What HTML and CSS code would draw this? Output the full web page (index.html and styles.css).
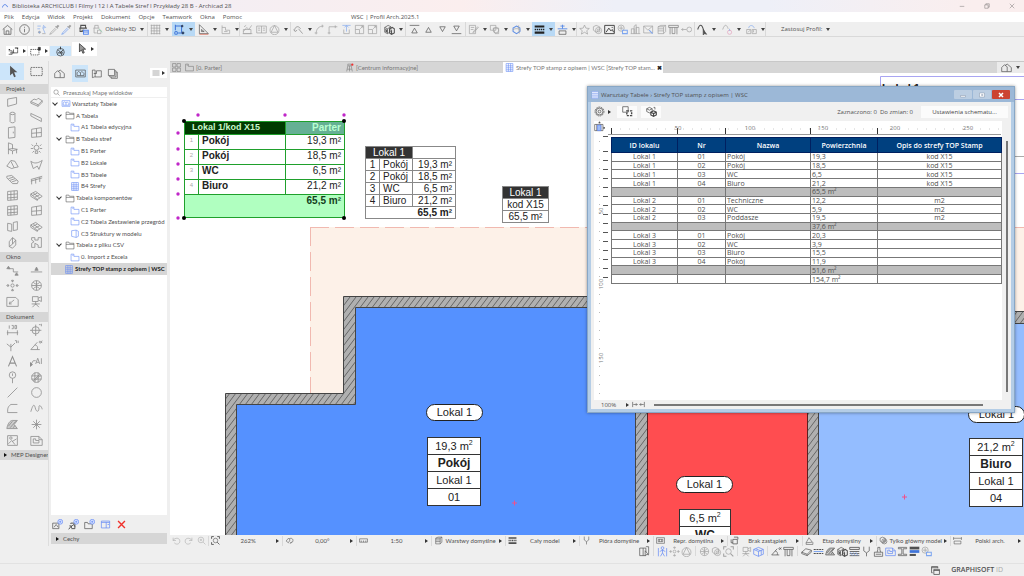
FILE: index.html
```
<!DOCTYPE html>
<html lang="pl">
<head>
    <meta charset="UTF-8">
    <title>Archicad 28</title>
    <link rel="stylesheet" href="styles.css">
</head>
<body>

    <!-- icon sprite -->
    <svg class="sprite">
        <symbol id="logo" viewBox="0 0 16 16"><path d="M1 12C3 3 11 1 15 11" stroke="#4a7be8" stroke-width="2.4"/></symbol>
        <symbol id="home" viewBox="0 0 16 16"><path d="M1 8L8 2l7 6M3 7v8h10V7M6 15v-5h4v5"/></symbol>
        <symbol id="info" viewBox="0 0 16 16"><circle cx="8" cy="8" r="7"/><path d="M8 7v5M8 4v1.500"/></symbol>
        <symbol id="pick" viewBox="0 0 16 16"><path d="M2 3h5M2 7h4M11 2l3 3-4 1zM10 6l3 7" stroke="#85abee"/><circle cx="5" cy="12" r="1.500" fill="#85abee"/><path d="M9 14h5"/></symbol>
        <symbol id="dropper" viewBox="0 0 16 16"><path d="M9 3l4 4M10 5L3 12l-2 3 3-1 7-7"/><path d="M11 5l3-3" stroke-width="3"/></symbol>
        <symbol id="syringe" viewBox="0 0 16 16"><path d="M9 3l4 4"/><path d="M10 5l-7 7-2 3 3-1 7-7" stroke="#6d9bf0"/><path d="M11 5l3-3" stroke-width="3"/></symbol>
        <symbol id="shelf" viewBox="0 0 16 16"><path d="M2 6h11M4 6V2h7v4M3 6v5h4M5 9h4" stroke-width="1.500"/><path d="M8 9h7v6H8zM8 11.500h7" stroke="#5c8cf0" stroke-width="1.500"/></symbol>
        <symbol id="shelf2" viewBox="0 0 16 16"><path d="M2 6h9M4 6V2h5v4M3 6v7h4M8 9h5v5H8z"/><path d="M10 7l5 5" stroke="#8fcfae"/></symbol>
        <symbol id="grid" viewBox="0 0 16 16"><path d="M1 2h14M1 6h14M1 10h14M1 14h14M2 1v14M6 1v14M10 1v14M14 1v14"/></symbol>
        <symbol id="snap" viewBox="0 0 16 16"><path d="M2 1v8M2 3h9v9M6 13h6" stroke="#3f74d8" stroke-width="1.500"/><circle cx="3" cy="13" r="2" stroke="#3f74d8" stroke-width="1.500"/><circle cx="13" cy="13" r="1.500" fill="#2456b8"/><circle cx="12" cy="3" r="1.200" fill="#2456b8"/></symbol>
        <symbol id="ruler" viewBox="0 0 16 16"><path d="M2 1v13h13z"/><path d="M5 8v3h4z"/><path d="M2 15h13" stroke="#e06a55"/></symbol>
        <symbol id="guide" viewBox="0 0 16 16"><path d="M3 2v12h11V9H8V5H3M6 11h5"/></symbol>
        <symbol id="hill" viewBox="0 0 16 16"><path d="M1 14h14M2 11l5-6 3 3 4-6M3 4l3-2M2 8h11v6H2z"/></symbol>
        <symbol id="panel" viewBox="0 0 16 16"><path d="M1 3h14v10H1zM8 3v10M3 6h3M3 9h3M10 6h3M10 9h3"/></symbol>
        <symbol id="tri" viewBox="0 0 16 16"><circle cx="8" cy="9" r="6.500"/><path d="M8 2l5 10H3z"/></symbol>
        <symbol id="hook" viewBox="0 0 16 16"><path d="M2 10C3 3 8 2 11 7M1 8l2 3 3-2M8 7l6 7" stroke-width="1.400"/></symbol>
        <symbol id="arc" viewBox="0 0 16 16"><path d="M3 15C3 7 7 3 14 3M1 13h4M12 1v4"/></symbol>
        <symbol id="corner" viewBox="0 0 16 16"><path d="M3 15V4h12M1 13h4M12 2v4"/></symbol>
        <symbol id="lift" viewBox="0 0 16 16"><path d="M2 2h12M8 3v8M5 5l3-3 3 3" stroke="#85abee"/><path d="M4 8v6h8V8"/></symbol>
        <symbol id="resize" viewBox="0 0 16 16"><path d="M2 2h12v12H2zM2 8h6v6M9 7l4-4M10 3h3v3"/></symbol>
        <symbol id="cube" viewBox="0 0 16 16"><path d="M1 5l7-3 7 3v7l-7 3-7-3zM1 5l7 3 7-3M8 8v7M4 4l7 3M12 6v7"/></symbol>
        <symbol id="cubes" viewBox="0 0 16 16"><path d="M1 5l5-3 4 2v7l-5 3-4-2zM1 5l4 2 5-3M5 7v7"/><path d="M8 7l4-2 3 2v6l-4 2-3-2zM11 9v6M2 8l3 2M2 10l3 2" stroke-width="1.500"/></symbol>
        <symbol id="top" viewBox="0 0 16 16"><path d="M1 2h14M8 6l4 7H4z"/></symbol>
        <symbol id="up" viewBox="0 0 16 16"><path d="M8 5l4 7H4z"/></symbol>
        <symbol id="down" viewBox="0 0 16 16"><path d="M8 11L4 4h8z"/></symbol>
        <symbol id="bottom" viewBox="0 0 16 16"><path d="M1 14h14M8 10L4 3h8z"/></symbol>
        <symbol id="note" viewBox="0 0 16 16"><path d="M2 2h9v12H2zM4 5h5M4 8h4M7 12l7-8 1 1-7 8z"/></symbol>
        <symbol id="shapes" viewBox="0 0 16 16"><path d="M2 2h8v7H2zM6 6h8v8H9z"/><circle cx="10" cy="9" r="4"/></symbol>
        <symbol id="orbit" viewBox="0 0 16 16"><path d="M8 3l5 3v5l-5 3-5-3V6z" stroke="#5f8fe6" stroke-width="1.500"/><path d="M2 9c2-3 10-3 12 0M11 2l1 12"/></symbol>
        <symbol id="layers" viewBox="0 0 16 16"><path d="M1 3.500h14M1 12.500h14" stroke-width="3"/><path d="M1 8h14" stroke-width="2.500" stroke-dasharray="2 1"/></symbol>
        <symbol id="plane" viewBox="0 0 16 16"><path d="M1 7h14M8 1v6M5 3h6" stroke="#5f8fe6" stroke-width="1.400"/><path d="M3 10h10v5H3z"/></symbol>
        <symbol id="star" viewBox="0 0 16 16"><path d="M8 1.500l2 4.500 5 .5-3.700 3.200 1.200 5L8 12l-4.500 2.700 1.200-5L1 6.500 6 6z"/></symbol>
        <symbol id="hex" viewBox="0 0 16 16"><path d="M6 2l5 2v5l-5 3-4-3V4z"/><circle cx="9.500" cy="9.500" r="4.500"/><circle cx="9.500" cy="9.500" r="2"/></symbol>
        <symbol id="image" viewBox="0 0 16 16"><path d="M1 2h14v12H1zM3 12l4-6 3 4 2-2 2 4" stroke-width="1.400"/><path d="M11 5h2"/></symbol>
        <symbol id="cloud" viewBox="0 0 16 16"><circle cx="6" cy="6" r="4.500"/><path d="M3 6h6M6 3v6"/><path d="M8 9h7v5H8z" stroke="#7ea6f0" stroke-width="1.500"/></symbol>
        <symbol id="bldg" viewBox="0 0 16 16"><path d="M2 14V7h4v7M6 14V3l3-2v13M9 14V5h4v9M1 14h14"/></symbol>
        <symbol id="mail" viewBox="0 0 16 16"><path d="M1 3h13v10H1zM1 3l6 6 7-6"/><path d="M9 9l5 5" stroke="#7ea6f0" stroke-width="1.500"/></symbol>
        <symbol id="stack" viewBox="0 0 16 16"><path d="M3 4l4-2h7l-3 2zM3 4v10h8V4M14 2v9l-3 3M3 7h8M3 10h8"/></symbol>
        <symbol id="frame" viewBox="0 0 16 16"><path d="M1 2h14v3H1zM3 5v10M13 5v10M6 5v9h4V5"/></symbol>
        <symbol id="link" viewBox="0 0 16 16"><circle cx="12" cy="8" r="3.500"/><path d="M8 8H1M3 6L1 8l2 2"/></symbol>
        <symbol id="polyarrow" viewBox="0 0 16 16"><path d="M1 8C4-1 7 1 9 7l2 6" stroke-width="1.500"/><path d="M9 8v8l2-2 3 1z" fill="currentColor"/></symbol>
        <symbol id="polypin" viewBox="0 0 16 16"><path d="M1 8C4-1 7 1 9 7"/><circle cx="11" cy="12" r="3" stroke="#e3a2bd"/><path d="M11 7v3" stroke="#85abee"/></symbol>
        <symbol id="lock" viewBox="0 0 16 16"><path d="M1 8h6v6H1zM9 8h6v6H9zM3 12l3-3M11 12V9"/><path d="M4 6c0-5 7-5 8 0" stroke="#85abee"/></symbol>
        <symbol id="arrow" viewBox="0 0 16 16"><path d="M5 1v12l3-3 2 5 2-1-2-5h4z" fill="currentColor" stroke="none"/></symbol>
        <symbol id="cursor" viewBox="0 0 16 16"><path d="M5 1v12l3-3 2 5 2-1-2-5h4z" fill="#999" stroke="#222"/></symbol>
        <symbol id="marquee" viewBox="0 0 16 16"><path d="M1 3h14v10H1z" stroke-dasharray="2 1"/></symbol>
        <symbol id="marqueedot" viewBox="0 0 16 16"><path d="M1 5h12v8H1z" stroke-dasharray="2 1"/><path d="M12 2h3v4h-3z" fill="currentColor"/></symbol>
        <symbol id="spin" viewBox="0 0 16 16"><circle cx="8" cy="9" r="5.500"/><path d="M8 9l4-3M8 1v4M5 6l3 3 2 4M4 10h8" stroke-width="1.300"/></symbol>
        <symbol id="walls" viewBox="0 0 16 16"><path d="M1 7h5v5H1M3 10h6M8 5v5h6V6" /><path d="M1 5h2M10 3h4v2" stroke-width="1.500"/></symbol>
        <symbol id="wall" viewBox="0 0 16 16"><path d="M2 5l11-2v8L2 14z"/></symbol>
        <symbol id="slab" viewBox="0 0 16 16"><path d="M1 9l6-5 8 2-6 6zM1 9v2l8 3v-2M9 14l6-5V6"/></symbol>
        <symbol id="slabtop" viewBox="0 0 16 16"><path d="M1 8l4-3 3 1 2-2 5 3-5 5zM1 8v2l9 4v-2M10 14l5-5V7"/></symbol>
        <symbol id="column" viewBox="0 0 16 16"><ellipse cx="8" cy="3" rx="3" ry="1.500"/><path d="M5 3v10c0 2 6 2 6 0V3"/></symbol>
        <symbol id="beam" viewBox="0 0 16 16"><path d="M1 3l13 6v4L1 6z"/></symbol>
        <symbol id="door" viewBox="0 0 16 16"><path d="M3 2l8-1v13l-8 1zM9 7v2"/></symbol>
        <symbol id="window" viewBox="0 0 16 16"><path d="M2 4l12-2v11L2 14zM8 3v10.500M2 9l12-1"/></symbol>
        <symbol id="chair" viewBox="0 0 16 16"><path d="M3 1v14M3 1l5 2v6M3 9l5 2 6-2-6-1M8 11v4M13 9v5M3 9l5-1"/></symbol>
        <symbol id="lamp" viewBox="0 0 16 16"><circle cx="8" cy="7" r="3"/><path d="M6.500 11h3v3h-3zM8 1v2M2 3l2 2M14 3l-2 2M1 8h3M12 8h3M3 13l2-2M13 13l-2-2"/></symbol>
        <symbol id="roof" viewBox="0 0 16 16"><path d="M1 10l5-7 5 1 4 7-5 1-4-8M1 10l6 3 3-1"/></symbol>
        <symbol id="shell" viewBox="0 0 16 16"><path d="M1 4c4 3 8 3 14-1l-4 11-2-4-5 3z"/></symbol>
        <symbol id="stair" viewBox="0 0 16 16"><path d="M1 4l6-1 8 7-1 3H8L1 6zM3 7l6-2M5 9l6-2M7 11l6-2"/></symbol>
        <symbol id="rail" viewBox="0 0 16 16"><path d="M1 8l14-4M1 10l14-4M2 8v6M7 7v6M12 5v6"/></symbol>
        <symbol id="cwall" viewBox="0 0 16 16"><path d="M2 3l12-1v11L2 14zM6 3v11M10 2v11M2 7l12-1M2 11l12-1"/></symbol>
        <symbol id="mesh" viewBox="0 0 16 16"><path d="M1 6l6-3 8 6-6 4zM4 5l8 6M3 8l6-3M6 10l6-3M1 6v3l8 5v-2"/></symbol>
        <symbol id="zone" viewBox="0 0 16 16"><path d="M2 4l5 1v9l-5-1zM9 3l5-1v10l-5 1z"/></symbol>
        <symbol id="morph" viewBox="0 0 16 16"><path d="M4 7l4-5 4 3v6l-4 4-4-2zM8 2v8l-4 3M8 10l4-5"/></symbol>
        <symbol id="puzzle" viewBox="0 0 16 16"><path d="M2 2h4v3h4V2h4v12h-4v-3L6 9v5H2V9l3-2-3-2z"/></symbol>
        <symbol id="section" viewBox="0 0 16 16"><path d="M3 7h6v4h6"/><path d="M1 7l2-3 2 3zM11 15l2-3 2 3z" fill="currentColor"/></symbol>
        <symbol id="elev" viewBox="0 0 16 16"><path d="M1 11h14"/><path d="M6 9l2-4 2 4z" fill="currentColor"/></symbol>
        <symbol id="interior" viewBox="0 0 16 16"><circle cx="8" cy="8" r="2"/><path d="M8 2v2M8 12v2M2 8h2M12 8h2M6.500 2.500h3L8 1zM6.500 13.500h3L8 15zM2.500 6.500v3L1 8zM13.500 6.500v3L15 8z"/></symbol>
        <symbol id="globe" viewBox="0 0 16 16"><circle cx="8" cy="8" r="6"/><path d="M8 2v12M2 8h12M4 4c3 3 5 3 8 0M4 12c3-3 5-3 8 0"/></symbol>
        <symbol id="detail" viewBox="0 0 16 16"><path d="M1 3h11l3 3v8H1zM4 11l6-5M4 11l1-3M4 11h3"/></symbol>
        <symbol id="camera" viewBox="0 0 16 16"><path d="M3 2h7v6H3zM10 4l4-2v6l-4-2M7 8v4M3 15l4-4 4 4M2 11h10"/></symbol>
        <symbol id="dim" viewBox="0 0 16 16"><path d="M1 12h14M2 9v6M14 9v6M4 3v4M7 3h2v4H7M11 3h2v4h-2z"/></symbol>
        <symbol id="level" viewBox="0 0 16 16"><circle cx="7" cy="9" r="4.500"/><path d="M7 2v14M0 9h14M11 2h2M14 1v3"/></symbol>
        <symbol id="slope" viewBox="0 0 16 16"><path d="M1 6l5 4V6M6 10v5M6 10l5-5M11 2h2v3M15 2v3"/></symbol>
        <symbol id="angle" viewBox="0 0 16 16"><path d="M9 4L1 13h11M6 7c3 1 4 3 3 6M13 3c-2-2-2 3 0 2l2-3M13 3l2 2"/></symbol>
        <symbol id="text" viewBox="0 0 16 16"><path d="M3 14L8 2l5 12M5 10h6" stroke-width="1.300"/></symbol>
        <symbol id="label" viewBox="0 0 16 16"><path d="M1 12l3-5h3M7 11l2.500-7L12 11M8 9h3M14 4v7"/><path d="M0 14V9l3 3z" fill="currentColor"/></symbol>
        <symbol id="pin" viewBox="0 0 16 16"><circle cx="8" cy="5" r="4"/><path d="M8 9v6M8 3v3"/></symbol>
        <symbol id="zonex" viewBox="0 0 16 16"><circle cx="8" cy="8" r="6"/><path d="M2 6h12M2 10h12M6 2v12M10 2v12M4 12l8-8M6 12l6-6"/></symbol>
        <symbol id="line" viewBox="0 0 16 16"><path d="M2 14L14 2"/></symbol>
        <symbol id="circle" viewBox="0 0 16 16"><circle cx="8" cy="8" r="6"/></symbol>
        <symbol id="poly" viewBox="0 0 16 16"><path d="M14 3H6C2 6 2 8 2 13h12"/></symbol>
        <symbol id="spline" viewBox="0 0 16 16"><path d="M1 12C5-2 6 6 7 9s4 4 4-2 4 0 4 2"/></symbol>
        <symbol id="fill" viewBox="0 0 16 16"><path d="M1 13C2 7 5 3 8 3h6l-4 5 4 5z" fill="#ccc"/><path d="M3 10l5-6M5 12l7-8M9 12l2-3"/></symbol>
        <symbol id="spark" viewBox="0 0 16 16"><path d="M8 2v12M2 8h12M4 4l8 8M12 4l-8 8"/></symbol>
        <symbol id="figure" viewBox="0 0 16 16"><path d="M2 2h12v12H2zM3 12l4-4 4 5M8 9l5-3"/><circle cx="6" cy="5" r="1.500"/></symbol>
        <symbol id="drawing" viewBox="0 0 16 16"><path d="M1 3h10l4 4v7H1zM4 11V6h3v2h4v3zM11 3v4h4"/></symbol>
        <symbol id="map" viewBox="0 0 16 16"><path d="M1 14V8l4-4 4 3v7zM6 5l3-2 6 5v6H9"/></symbol>
        <symbol id="views" viewBox="0 0 16 16"><path d="M1 3h14v10H1z"/><path d="M3 11V7l2-2 3 2v4zM8 7l2-2 3 3v3H8"/></symbol>
        <symbol id="layout" viewBox="0 0 16 16"><path d="M2 3v11l3-1h10V4H8v4H4M2 3h4v10"/></symbol>
        <symbol id="pubset" viewBox="0 0 16 16"><path d="M2 2h9v9H2zM11 4h2v9H4v-2M13 6h2v9H6v-2"/></symbol>
        <symbol id="menu" viewBox="0 0 16 16"><path d="M1 4h14M1 8h14M1 12h14"/></symbol>
        <symbol id="search" viewBox="0 0 16 16"><circle cx="7" cy="7" r="5"/><path d="M11 11l4 4"/></symbol>
        <symbol id="folder" viewBox="0 0 16 16"><path d="M1 14V2h5l1 2h8v10zM1 6h14"/></symbol>
        <symbol id="view" viewBox="0 0 16 16"><path d="M1 14V2h5v4h9v8zM3 4h2"/></symbol>
        <symbol id="sheet" viewBox="0 0 16 16"><path d="M2 1h12v14H2zM2 5h12M2 8.500h12M2 12h12M6 1v14M10 1v14"/></symbol>
        <symbol id="box3d" viewBox="0 0 16 16"><path d="M2 3l8-1 4 2v9l-4 2-8-2zM10 2v13"/></symbol>
        <symbol id="addview" viewBox="0 0 16 16"><path d="M1 14V6h9v8zM3 12l3-4 3 4"/><circle cx="12" cy="4" r="3.500" stroke="#5f86f5" fill="#dde6ff"/><path d="M12 2.500v3M10.500 4h3" stroke="#5f86f5"/></symbol>
        <symbol id="saveview" viewBox="0 0 16 16"><path d="M4 7V6h6v8H5M6 10l2-2 2 3M1 15l4-5M5 13v-3H2" stroke-width="1.400"/><circle cx="12" cy="4" r="3.500" stroke="#5f86f5" fill="#dde6ff"/><path d="M12 2.500v3M10.500 4h3" stroke="#5f86f5"/></symbol>
        <symbol id="addfolder" viewBox="0 0 16 16"><path d="M1 14V5h4l1 2h6v7z"/><circle cx="12" cy="4" r="3.500" stroke="#5f86f5" fill="#dde6ff"/><path d="M12 2.500v3M10.500 4h3" stroke="#5f86f5"/></symbol>
        <symbol id="winset" viewBox="0 0 16 16"><path d="M2 3h12v10H2zM2 5h12M9 5v8M11 8h2" stroke="#5f86f5"/></symbol>
        <symbol id="del" viewBox="0 0 16 16"><path d="M3 3l10 10M13 3L3 13" stroke="#f0302a" stroke-width="2"/></symbol>
        <symbol id="tiles" viewBox="0 0 16 16"><path d="M1 1h6v6H1zM9 1h6v6H9zM1 9h6v6H1zM9 9h6v6H9z"/></symbol>
        <symbol id="tower" viewBox="0 0 16 16"><path d="M3 15l2-10h6l2 10M5 5V2h6v3M4 11h8M8 5v10"/><circle cx="13" cy="3" r="2" fill="#f03030" stroke="none"/></symbol>
        <symbol id="undo" viewBox="0 0 16 16"><path d="M2 3v5h5M2 8c3-6 12-5 12 1s-7 7-10 3"/></symbol>
        <symbol id="redo" viewBox="0 0 16 16"><path d="M14 3v5H9M14 8C11 2 2 3 2 9s7 7 10 3"/></symbol>
        <symbol id="zoomin" viewBox="0 0 16 16"><circle cx="7" cy="7" r="5"/><path d="M11 11l4 4M5 7h4M7 5v4"/></symbol>
        <symbol id="zoomfit" viewBox="0 0 16 16"><circle cx="8" cy="8" r="4"/><path d="M11 11l4 4M1 5V1h4M11 1h4v4M5 15H1v-4" stroke-width="1.500"/></symbol>
        <symbol id="rotate" viewBox="0 0 16 16"><path d="M2 9l4-5 3 3-3 5zM7 5c6-3 9 2 6 6l-4 2M9 13l3-3"/></symbol>
        <symbol id="scale" viewBox="0 0 16 16"><path d="M1 5h14v6H1zM4 8v3M8 8v3M12 8v3"/></symbol>
        <symbol id="pens" viewBox="0 0 16 16"><path d="M4 1v6l4 3 4-3V1M8 10v5"/></symbol>
        <symbol id="tag" viewBox="0 0 16 16"><path d="M1 3h14v10H1zM4 6h8v4H4zM6 6v4M10 6v4"/></symbol>
        <symbol id="override" viewBox="0 0 16 16"><path d="M5 6h8v8H5zM7 2h7v4M2 6v6h3" stroke-width="1.300"/></symbol>
        <symbol id="pagepick" viewBox="0 0 16 16"><path d="M1 3h9v11H1zM6 3v11M10 1h4v11"/><path d="M9 7v7l2-2 3 1z" fill="#fff"/></symbol>
        <symbol id="reno" viewBox="0 0 16 16"><path d="M2 12l5-9 6 8zM2 12v3h12v-4"/></symbol>
        <symbol id="stampi" viewBox="0 0 16 16"><path d="M2 9h12v6H2zM6 9l1-4V2h3v3l1 4M4 12h8"/></symbol>
        <symbol id="std" viewBox="0 0 16 16"><path d="M1 2v5M15 2v5M1 4h14M2 9h12v5H2z"/></symbol>
        <symbol id="person" viewBox="0 0 16 16"><circle cx="8" cy="3" r="2"/><path d="M8 5v5M4 8l4-2 4 2M5 15l3-5 3 5M2 3v12M14 3v12"/></symbol>
        <symbol id="hline" viewBox="0 0 16 16"><path d="M1 5h14M1 11h14" stroke-width="1.500" stroke-dasharray="3 1"/><path d="M1 8h14" stroke="#7ea6f0" stroke-width="1.500"/></symbol>
        <symbol id="hatch" viewBox="0 0 16 16"><path d="M1 2h14v3H1zM1 8h14M1 11h14M1 14h14" stroke-width="1.200"/><path d="M2 9l3 5M6 9l3 5M10 9l3 5" stroke="#7ea6f0"/></symbol>
        <symbol id="ibeam" viewBox="0 0 16 16"><path d="M2 2h12v2H9v8h5v2H2v-2h5V4H2z"/></symbol>
        <symbol id="bars" viewBox="0 0 16 16"><path d="M1 3h14" stroke-width="4"/><path d="M1 8h14" stroke="#3f74d8" stroke-width="4"/><path d="M1 13h9" stroke-width="3"/></symbol>
        <symbol id="windows" viewBox="0 0 16 16"><path d="M5 6h10v9H5zM5 8h10M3 12H1V1h11v3M1 3h11" stroke-width="1.400"/></symbol>
        <symbol id="gear" viewBox="0 0 16 16"><circle cx="8" cy="8" r="6.500" stroke-dasharray="2.500 1"/><circle cx="8" cy="8" r="5"/><circle cx="8" cy="8" r="2"/></symbol>
        <symbol id="select2d" viewBox="0 0 16 16"><path d="M1 1h8v8H1z"/><path d="M7 7h7v7H7z" stroke-dasharray="3 1.500" stroke-width="2"/></symbol>
        <symbol id="select3d" viewBox="0 0 16 16"><path d="M1 4l4-2 4 2v4L5 10 1 8zM1 4l4 2 4-2"/><path d="M7 9l4-2 4 2v4l-4 2-4-2zM7 9l4 2 4-2M11 11v4" stroke-width="1.600"/><path d="M11 2h2v3"/></symbol>
        <symbol id="fit" viewBox="0 0 20 10"><path d="M1 1v8M19 1v8M2 5h6M12 5h6M6 3l2 2-2 2M14 3l-2 2 2 2"/></symbol>
        <symbol id="origin" viewBox="0 0 16 16"><path d="M1 5h12v9H1zM4 5v9M10 5v9"/><path d="M5 6h5v8H5z" fill="#9cbcf8" stroke="#5f86f5"/><path d="M7 3l1-2 1 2zM14 9l2 1-2 1z" fill="currentColor"/></symbol>
    </svg>

    <header class="titlebar">
        <svg class="icon"><use href="#logo"/></svg>
        <span class="app-title">Biblioteka ARCHICLUB I Filmy I 12 I A Tabele Stref I Przykłady 28 B - Archicad 28</span>
        <div class="win-buttons">
            <button aria-label="Minimalizuj"><svg class="icon" viewBox="0 0 16 16"><path d="M2 9h12"/></svg></button>
            <button aria-label="Przywróć"><svg class="icon" viewBox="0 0 16 16"><path d="M2 5h9v9H2zM5 5V2h9v9h-3"/></svg></button>
            <button aria-label="Zamknij"><svg class="icon" viewBox="0 0 16 16"><path d="M2 2l12 12M14 2L2 14"/></svg></button>
        </div>
    </header>

    <nav class="menubar">
        <button>Plik</button><button>Edycja</button><button>Widok</button><button>Projekt</button><button>Dokument</button><button>Opcje</button><button>Teamwork</button><button>Okna</button><button>Pomoc</button>
        <span class="profile">WSC | Profil Arch.2025.1</span>
    </nav>

    <div class="toolbar">
        <div class="group"><button aria-label="Start"><svg class="icon"><use href="#home"/></svg></button></div>
        <div class="group"><button aria-label="Info"><svg class="icon"><use href="#info"/></svg></button></div>
        <div class="group faint">
            <button><svg class="icon"><use href="#pick"/></svg></button>
            <button><svg class="icon"><use href="#dropper"/></svg></button>
            <button><svg class="icon"><use href="#syringe"/></svg></button>
        </div>
        <div class="group">
            <button><svg class="icon"><use href="#shelf"/></svg></button>
            <button class="faint"><svg class="icon"><use href="#shelf2"/></svg></button>
            <button class="drop">Obiekty 3D</button>
        </div>
        <div class="group tight">
            <button class="drop faint"><svg class="icon"><use href="#grid"/></svg></button>
            <button class="drop on"><svg class="icon"><use href="#snap"/></svg></button>
            <button class="drop"><svg class="icon"><use href="#ruler"/></svg></button>
            <button class="drop faint"><svg class="icon"><use href="#guide"/></svg></button>
        </div>
        <div class="group faint">
            <button><svg class="icon"><use href="#hill"/></svg></button>
            <button><svg class="icon"><use href="#panel"/></svg></button>
            <button class="drop"><svg class="icon"><use href="#tri"/></svg></button>
        </div>
        <div class="group faint">
            <button class="drop"><svg class="icon"><use href="#hook"/></svg></button>
            <button><svg class="icon"><use href="#arc"/></svg></button>
            <button><svg class="icon"><use href="#corner"/></svg></button>
            <button><svg class="icon"><use href="#lift"/></svg></button>
            <button><svg class="icon"><use href="#resize"/></svg></button>
            <button><svg class="icon"><use href="#resize"/></svg></button>
        </div>
        <div class="group"><button class="drop"><svg class="icon"><use href="#cubes"/></svg></button></div>
        <div class="group">
            <button><svg class="icon"><use href="#top"/></svg></button>
            <button><svg class="icon"><use href="#up"/></svg></button>
            <button><svg class="icon"><use href="#down"/></svg></button>
            <button><svg class="icon"><use href="#bottom"/></svg></button>
        </div>
        <div class="group tight">
            <button class="drop faint"><svg class="icon"><use href="#note"/></svg></button>
            <button class="drop faint"><svg class="icon"><use href="#shapes"/></svg></button>
            <button class="drop faint"><svg class="icon"><use href="#orbit"/></svg></button>
            <button class="drop on"><svg class="icon"><use href="#layers"/></svg></button>
            <button class="drop"><svg class="icon"><use href="#plane"/></svg></button>
        </div>
        <div class="group faint">
            <button><svg class="icon"><use href="#star"/></svg></button>
            <button><svg class="icon"><use href="#hex"/></svg></button>
            <button class="dark"><svg class="icon"><use href="#image"/></svg></button>
            <button><svg class="icon"><use href="#cloud"/></svg></button>
            <button><svg class="icon"><use href="#bldg"/></svg></button>
            <button><svg class="icon"><use href="#mail"/></svg></button>
            <button><svg class="icon"><use href="#stack"/></svg></button>
            <button class="mid"><svg class="icon"><use href="#frame"/></svg></button>
            <button><svg class="icon"><use href="#link"/></svg></button>
        </div>
        <div class="group tight">
            <button class="drop"><svg class="icon"><use href="#polyarrow"/></svg></button>
            <button class="drop faint"><svg class="icon"><use href="#polypin"/></svg></button>
            <button class="drop faint"><svg class="icon"><use href="#lock"/></svg></button>
        </div>
        <button class="drop profile-btn">Zastosuj Profil:</button>
    </div>

    <div class="infobox">
        <button class="pop"><svg class="icon"><use href="#walls"/></svg></button>
        <button class="pop"><svg class="icon"><use href="#marqueedot"/></svg></button>
        <button class="pop active"><svg class="icon"><use href="#spin"/></svg></button>
        <button class="pop tall"><svg class="icon"><use href="#cursor"/></svg></button>
    </div>

    <main class="main">
        <aside class="toolbox">
            <div class="tools pick-tools">
                <button class="selected" aria-label="Wskaźnik"><svg class="icon"><use href="#arrow"/></svg></button>
                <button aria-label="Zaznaczenie"><svg class="icon"><use href="#marquee"/></svg></button>
            </div>
            <h3>Projekt</h3>
            <div class="tools project-tools">
                <button><svg class="icon"><use href="#wall"/></svg></button><button><svg class="icon"><use href="#slabtop"/></svg></button>
                <button><svg class="icon"><use href="#column"/></svg></button><button><svg class="icon"><use href="#beam"/></svg></button>
                <button><svg class="icon"><use href="#door"/></svg></button><button><svg class="icon"><use href="#window"/></svg></button>
                <button><svg class="icon"><use href="#chair"/></svg></button><button><svg class="icon"><use href="#lamp"/></svg></button>
                <button><svg class="icon"><use href="#roof"/></svg></button><button><svg class="icon"><use href="#shell"/></svg></button>
                <button><svg class="icon"><use href="#stair"/></svg></button><button><svg class="icon"><use href="#rail"/></svg></button>
                <button><svg class="icon"><use href="#cwall"/></svg></button><button><svg class="icon"><use href="#mesh"/></svg></button>
                <button><svg class="icon"><use href="#cwall"/></svg></button><button><svg class="icon"><use href="#window"/></svg></button>
                <button><svg class="icon"><use href="#zone"/></svg></button><button><svg class="icon"><use href="#mesh"/></svg></button>
                <button><svg class="icon"><use href="#morph"/></svg></button><button><svg class="icon"><use href="#puzzle"/></svg></button>
            </div>
            <h3>Okno</h3>
            <div class="tools window-tools">
                <button><svg class="icon"><use href="#section"/></svg></button><button><svg class="icon"><use href="#elev"/></svg></button>
                <button><svg class="icon"><use href="#interior"/></svg></button><button><svg class="icon"><use href="#globe"/></svg></button>
                <button><svg class="icon"><use href="#detail"/></svg></button><button><svg class="icon"><use href="#camera"/></svg></button>
            </div>
            <h3>Dokument</h3>
            <div class="tools doc-tools">
                <button><svg class="icon"><use href="#dim"/></svg></button><button><svg class="icon"><use href="#level"/></svg></button>
                <button><svg class="icon"><use href="#slope"/></svg></button><button><svg class="icon"><use href="#angle"/></svg></button>
                <button><svg class="icon"><use href="#text"/></svg></button><button><svg class="icon"><use href="#label"/></svg></button>
                <button><svg class="icon"><use href="#pin"/></svg></button><button><svg class="icon"><use href="#zonex"/></svg></button>
                <button><svg class="icon"><use href="#line"/></svg></button><button><svg class="icon"><use href="#circle"/></svg></button>
                <button><svg class="icon"><use href="#poly"/></svg></button><button><svg class="icon"><use href="#spline"/></svg></button>
                <button><svg class="icon"><use href="#fill"/></svg></button><button><svg class="icon"><use href="#spark"/></svg></button>
                <button><svg class="icon"><use href="#figure"/></svg></button><button><svg class="icon"><use href="#drawing"/></svg></button>
            </div>
            <h3 class="closed">MEP Designer</h3>
        </aside>

        <aside class="navigator">
            <div class="nav-tabs">
                <button aria-label="Mapa projektu"><svg class="icon"><use href="#map"/></svg></button>
                <button class="selected" aria-label="Mapa widoków"><svg class="icon"><use href="#views"/></svg></button>
                <button aria-label="Teczka arkuszy"><svg class="icon"><use href="#layout"/></svg></button>
                <button aria-label="Publikator"><svg class="icon"><use href="#pubset"/></svg></button>
                <button class="nav-menu" aria-label="Menu"><svg class="icon"><use href="#menu"/></svg></button>
            </div>
            <label class="search">
                <svg class="icon"><use href="#search"/></svg>
                <input type="text" placeholder="Przeszukaj Mapę widoków" aria-label="Przeszukaj Mapę widoków">
            </label>
            <div class="tree-box">
                <ul class="tree">
                    <li class="lvl0 open blue"><svg class="icon"><use href="#views"/></svg>Warsztaty Tabele</li>
                    <li class="lvl1 open"><svg class="icon"><use href="#folder"/></svg>A Tabela</li>
                    <li class="lvl2 blue"><svg class="icon"><use href="#view"/></svg>A1 Tabela edycyjna</li>
                    <li class="lvl1 open"><svg class="icon"><use href="#folder"/></svg>B Tabela stref</li>
                    <li class="lvl2 blue"><svg class="icon"><use href="#view"/></svg>B1 Parter</li>
                    <li class="lvl2 blue"><svg class="icon"><use href="#view"/></svg>B2 Lokale</li>
                    <li class="lvl2 blue"><svg class="icon"><use href="#view"/></svg>B3 Tabele</li>
                    <li class="lvl2 blue"><svg class="icon"><use href="#sheet"/></svg>B4 Strefy</li>
                    <li class="lvl1 open"><svg class="icon"><use href="#folder"/></svg>Tabela komponentów</li>
                    <li class="lvl2 blue"><svg class="icon"><use href="#view"/></svg>C1 Parter</li>
                    <li class="lvl2 blue"><svg class="icon"><use href="#view"/></svg>C2 Tabela Zestawienie przegród</li>
                    <li class="lvl2 blue"><svg class="icon"><use href="#box3d"/></svg>C3 Struktury w modelu</li>
                    <li class="lvl1 open"><svg class="icon"><use href="#folder"/></svg>Tabela z pliku CSV</li>
                    <li class="lvl2 blue"><svg class="icon"><use href="#view"/></svg>0. Import z Excela</li>
                    <li class="lvl1 blue current"><svg class="icon"><use href="#sheet"/></svg>Strefy TOP stamp z opisem | WSC</li>
                </ul>
            </div>
            <div class="nav-actions">
                <button><svg class="icon"><use href="#addview"/></svg></button>
                <button><svg class="icon"><use href="#saveview"/></svg></button>
                <button><svg class="icon"><use href="#addfolder"/></svg></button>
                <button><svg class="icon"><use href="#winset"/></svg></button>
                <button aria-label="Usuń"><svg class="icon"><use href="#del"/></svg></button>
            </div>
            <button class="props">Cechy</button>
        </aside>

        <section class="workspace">
            <div class="tabs">
                <button class="overview" aria-label="Przegląd kart"><svg class="icon"><use href="#tiles"/></svg></button>
                <div class="tab"><svg class="icon"><use href="#view"/></svg>[0. Parter]</div>
                <div class="tab"><svg class="icon"><use href="#tower"/></svg>[Centrum informacyjne]</div>
                <div class="tab active blue"><svg class="icon"><use href="#sheet"/></svg><span>Strefy TOP stamp z opisem | WSC [Strefy TOP stam...</span><b>✖</b></div>
                <button class="drop tab-nav"><svg class="icon"><use href="#map"/></svg></button>
            </div>

            <div class="canvas">
                <!-- floor plan: terrace, walls, rooms -->
                <svg class="plan">
                    <defs>
                        <pattern id="wallhatch" width="6" height="8" patternUnits="userSpaceOnUse">
                            <rect width="6" height="8" fill="#b0b0b0"/>
                            <path d="M-1 9.300L7-1.300M-1 1.300L1-1.300M5 9.300L7 6.700" stroke="#666" stroke-width="1"/>
                        </pattern>
                    </defs>
                    <rect x="140" y="154" width="100%" height="166" fill="#fdf1e8"/>
                    <path d="M140 154.500H3000" stroke="#f1b9b0" stroke-dasharray="19 6"/>
                    <path d="M140.500 154V320" stroke="#f1b9b0" stroke-dasharray="19 6"/>
                    <path d="M173.500 223.500H648V238.500H3000V480H55.500V320.500H173.500Z" fill="url(#wallhatch)" stroke="#444"/>
                    <path d="M185.500 234.500H465.500V480H66.500V331.500H185.500Z" fill="#5591ff" stroke="#444"/>
                    <rect x="477.500" y="234.500" width="160" height="250" fill="#ff4d50" stroke="#5a2020"/>
                    <rect x="648.500" y="250.500" width="100%" height="250" fill="#94bdff" stroke="#444"/>
                    <path d="M342 430h5M344.500 427.500v5M732 424h5M734.500 421.500v5" stroke="#f0508a"/>
                    <path d="M710.500 40V3.500H3000M710 26.500H3000M710 100.500H3000" stroke="#a9a5f2"/>
                    <path d="M710 83.500H3000" stroke="#aaa"/>
                </svg>
                <div class="clipped-label">Lokal 1</div>

                <table class="parter">
                    <colgroup><col class="c-no"><col><col class="c-m2"></colgroup>
                    <tr><th colspan="2">Lokal 1/kod X15</th><th>Parter</th></tr>
                    <tr><td>1</td><td>Pokój</td><td>19,3 m²</td></tr>
                    <tr><td>2</td><td>Pokój</td><td>18,5 m²</td></tr>
                    <tr><td>3</td><td>WC</td><td>6,5 m²</td></tr>
                    <tr><td>4</td><td>Biuro</td><td>21,2 m²</td></tr>
                    <tr class="sum"><td colspan="3">65,5 m²</td></tr>
                </table>
                <!-- selection handles -->
                <svg class="handles">
                    <g fill="#000"><circle cx="8" cy="8" r="2"/><circle cx="168" cy="8" r="2"/><circle cx="8" cy="105" r="2"/><circle cx="168" cy="105" r="2"/></g>
                    <g fill="#c026c8"><circle cx="22" cy="2" r="1.700"/><circle cx="109" cy="2" r="1.700"/><circle cx="168" cy="2" r="1.700"/><circle cx="2" cy="20" r="1.700"/><circle cx="2" cy="36" r="1.700"/><circle cx="2" cy="51" r="1.700"/><circle cx="2" cy="66" r="1.700"/><circle cx="2" cy="81" r="1.700"/><circle cx="2" cy="105" r="1.700"/></g>
                </svg>

                <table class="rooms">
                    <colgroup><col class="c-no"><col><col class="c-area"></colgroup>
                    <tr><th colspan="2">Lokal 1</th><td></td></tr>
                    <tr><td>1</td><td>Pokój</td><td>19,3 m²</td></tr>
                    <tr><td>2</td><td>Pokój</td><td>18,5 m²</td></tr>
                    <tr><td>3</td><td>WC</td><td>6,5 m²</td></tr>
                    <tr><td>4</td><td>Biuro</td><td>21,2 m²</td></tr>
                    <tr class="sum"><td colspan="3">65,5 m²</td></tr>
                </table>

                <table class="topstamp">
                    <tr><th>Lokal 1</th></tr>
                    <tr><td>kod X15</td></tr>
                    <tr><td>65,5 m²</td></tr>
                </table>

                <div class="pill pill-a">Lokal 1</div>
                <div class="stamp stamp-a"><span>19,3 m<sup>2</sup></span><b>Pokój</b><span>Lokal 1</span><span>01</span></div>
                <div class="pill pill-b">Lokal 1</div>
                <div class="stamp stamp-b"><span>6,5 m<sup>2</sup></span><b>WC</b></div>
                <div class="pill pill-c">Lokal 1</div>
                <div class="stamp stamp-c"><span>21,2 m<sup>2</sup></span><b>Biuro</b><span>Lokal 1</span><span>04</span></div>

                <div class="window">
                    <div class="window-title">
                        <svg class="icon"><use href="#sheet"/></svg>
                        <span>Warsztaty Tabele › Strefy TOP stamp z opisem | WSC</span>
                        <div class="window-buttons">
                            <button aria-label="Minimalizuj"><svg class="icon" viewBox="0 0 16 16"><path d="M3 9h10v3H3z" fill="#fff"/></svg></button>
                            <button aria-label="Maksymalizuj"><svg class="icon" viewBox="0 0 16 16"><path d="M3 4h10v8H3zM7 7h3v2H7z" fill="#fff"/></svg></button>
                            <button class="close" aria-label="Zamknij"><svg class="icon" viewBox="0 0 16 16"><path d="M4 4l8 8M12 4l-8 8"/></svg></button>
                        </div>
                    </div>
                    <div class="window-bar">
                        <button class="gear"><svg class="icon"><use href="#gear"/></svg></button>
                        <button class="sel"><svg class="icon"><use href="#select2d"/></svg></button>
                        <button class="sel"><svg class="icon"><use href="#select3d"/></svg></button>
                        <span class="counts">Zaznaczono: 0&nbsp; Do zmian: 0</span>
                        <button class="scheme">Ustawienia schematu...</button>
                    </div>
                    <div class="sheet">
                        <div class="origin"><svg class="icon"><use href="#origin"/></svg></div>
                        <svg class="ruler-h">
                            <path d="M12 8H392" stroke="#ccc" stroke-dasharray="1 8"/>
                            <path d="M3.500 7v6M69.500 7v6M117.500 7v6M202.500 7v6M269.500 7v6" stroke="#333"/>
                            <path d="M0 13.500H393" stroke="#999"/>
                            <text x="70" y="9">50</text><text x="142" y="9">100</text><text x="215" y="9">150</text><text x="287" y="9">200</text><text x="360" y="9">250</text>
                        </svg>
                        <svg class="ruler-v">
                            <path d="M5.500 6V270" stroke="#bbb" stroke-dasharray="1 8"/>
                            <path d="M11.500 1V3M11.500 16V150" stroke="#555" stroke-width="5" stroke-dasharray="1 8"/>
                            <path d="M14.500 0V270" stroke="#999"/>
                            <text transform="rotate(-90 9 76)" x="9" y="76">50</text><text transform="rotate(-90 9 149)" x="9" y="149">100</text><text transform="rotate(-90 9 223)" x="9" y="223">150</text>
                        </svg>
                        <div class="sheet-body">
                            <table class="schedule">
                                <colgroup><col class="c-id"><col class="c-nr"><col class="c-name"><col class="c-pow"><col></colgroup>
                                <tr><th>ID lokalu</th><th>Nr</th><th>Nazwa</th><th>Powierzchnia</th><th>Opis do strefy TOP Stamp</th></tr>
                                <tr><td>Lokal 1</td><td>01</td><td>Pokój</td><td>19,3</td><td>kod X15</td></tr>
                                <tr><td>Lokal 1</td><td>02</td><td>Pokój</td><td>18,5</td><td>kod X15</td></tr>
                                <tr><td>Lokal 1</td><td>03</td><td>WC</td><td>6,5</td><td>kod X15</td></tr>
                                <tr><td>Lokal 1</td><td>04</td><td>Biuro</td><td>21,2</td><td>kod X15</td></tr>
                                <tr class="subtotal"><td></td><td></td><td></td><td>65,5 m²</td><td></td></tr>
                                <tr><td>Lokal 2</td><td>01</td><td>Techniczne</td><td>12,2</td><td>m2</td></tr>
                                <tr><td>Lokal 2</td><td>02</td><td>WC</td><td>5,9</td><td>m2</td></tr>
                                <tr><td>Lokal 2</td><td>03</td><td>Poddasze</td><td>19,5</td><td>m2</td></tr>
                                <tr class="subtotal"><td></td><td></td><td></td><td>37,6 m²</td><td></td></tr>
                                <tr><td>Lokal 3</td><td>01</td><td>Pokój</td><td>20,3</td><td></td></tr>
                                <tr><td>Lokal 3</td><td>02</td><td>WC</td><td>3,9</td><td></td></tr>
                                <tr><td>Lokal 3</td><td>03</td><td>Biuro</td><td>15,5</td><td></td></tr>
                                <tr><td>Lokal 3</td><td>04</td><td>Pokój</td><td>11,9</td><td></td></tr>
                                <tr class="subtotal"><td></td><td></td><td></td><td>51,6 m²</td><td></td></tr>
                                <tr><td></td><td></td><td></td><td>154,7 m²</td><td></td></tr>
                            </table>
                        </div>
                        <div class="scroll-v"></div>
                    </div>
                    <div class="window-foot">
                        <button class="zoom">100%</button>
                        <svg class="icon fit"><use href="#fit"/></svg>
                        <div class="scroll-h"></div>
                    </div>
                </div>
            </div>

            <div class="quick">
                <div class="quick-nav">
                    <button><svg class="icon"><use href="#undo"/></svg></button>
                    <button><svg class="icon"><use href="#redo"/></svg></button>
                    <button><svg class="icon"><use href="#zoomin"/></svg></button>
                </div>
                <button class="opt"><svg class="icon"><use href="#zoomfit"/></svg><span>262%</span></button>
                <button class="opt"><svg class="icon"><use href="#rotate"/></svg><span>0,00°</span></button>
                <button class="opt"><svg class="icon"><use href="#scale"/></svg><span>1:50</span></button>
                <button class="opt"><svg class="icon"><use href="#stack"/></svg><span>Warstwy domyślne</span></button>
                <button class="opt"><svg class="icon"><use href="#layers"/></svg><span>Cały model</span></button>
                <button class="opt"><svg class="icon"><use href="#pens"/></svg><span>Pióra domyślne</span></button>
                <button class="opt"><svg class="icon"><use href="#tag"/></svg><span>Repr. domyślna</span></button>
                <button class="opt"><svg class="icon"><use href="#override"/></svg><span>Brak zastąpień</span></button>
                <button class="opt"><svg class="icon"><use href="#reno"/></svg><span>Etap domyślny</span></button>
                <button class="opt"><svg class="icon"><use href="#hex"/></svg><span>Tylko główny model</span></button>
                <button class="opt"><svg class="icon"><use href="#std"/></svg><span>Polski arch.</span></button>
            </div>
        </section>
    </main>

    <div class="bottombar">
        <div class="group"><button><svg class="icon"><use href="#pagepick"/></svg></button></div>
        <div class="group faint">
            <button class="blue"><svg class="icon"><use href="#person"/></svg></button>
            <button><svg class="icon"><use href="#interior"/></svg></button>
            <button><svg class="icon"><use href="#tri"/></svg></button>
        </div>
        <div class="group faint">
            <button><svg class="icon"><use href="#globe"/></svg></button>
            <button><svg class="icon"><use href="#hex"/></svg></button>
            <button><svg class="icon"><use href="#zoomfit"/></svg></button>
        </div>
        <div class="group faint">
            <button><svg class="icon"><use href="#camera"/></svg></button>
            <button class="blue"><svg class="icon"><use href="#cube"/></svg></button>
        </div>
        <div class="group">
            <button><svg class="icon"><use href="#angle"/></svg></button>
            <button><svg class="icon"><use href="#frame"/></svg></button>
        </div>
        <div class="group">
            <button><svg class="icon"><use href="#slab"/></svg></button>
            <button><svg class="icon"><use href="#hline"/></svg></button>
            <button><svg class="icon"><use href="#fill"/></svg></button>
            <button><svg class="icon"><use href="#cubes"/></svg></button>
            <button><svg class="icon"><use href="#hatch"/></svg></button>
            <button><svg class="icon"><use href="#pens"/></svg></button>
            <button><svg class="icon"><use href="#stampi"/></svg></button>
            <button class="blue"><svg class="icon"><use href="#drawing"/></svg></button>
            <button><svg class="icon"><use href="#ibeam"/></svg></button>
            <button><svg class="icon"><use href="#bars"/></svg></button>
            <button class="faint"><svg class="icon"><use href="#cloud"/></svg></button>
        </div>
    </div>

    <footer class="status">
        <svg class="icon"><use href="#windows"/></svg>
        <span class="brand">GRAPHISOFT <i>ID</i></span>
    </footer>

</body>
</html>
```

FILE: styles.css
```
:root {
    --ui-bg: #efefef;
    --bar: #d6d6d6;
    --hi: #cce5fa;
    --line: #d9d9d9;
    --ink: #505050;
}

* {
    box-sizing: border-box;
}

body {
    margin: 0;
    height: 100vh;
    display: flex;
    flex-direction: column;
    overflow: hidden;
    background: var(--ui-bg);
    color: var(--ink);
    font: 6px/8px "Open Sans", "Noto Sans", sans-serif;
}

button {
    display: flex;
    align-items: center;
    justify-content: center;
    margin: 0;
    padding: 0;
    border: 0;
    background: none;
    color: inherit;
    font: inherit;
    white-space: nowrap;
}

.sprite {
    position: absolute;
    width: 0;
    height: 0;
}

.icon {
    flex: none;
    width: 11px;
    height: 11px;
    fill: none;
    stroke: currentColor;
    stroke-width: 1;
}

.faint { color: #a0a0a0; }
.mid { color: #777; }
.dark { color: #444; }

/* title and menu */
.titlebar {
    flex: none;
    height: 12px;
    display: flex;
    align-items: center;
    padding-left: 2px;
    gap: 4px;
    background: linear-gradient(90deg, #eeeef8, #fbeeee 45%, #eef0f8 60%, #eef0f8 75%, #faeeee 95%);
}

.titlebar .icon {
    width: 6px;
    height: 6px;
}

.win-buttons {
    display: flex;
    gap: 13px;
    margin-left: auto;
    padding-right: 6px;
}

.win-buttons button {
    width: 12px;
}

.menubar {
    flex: none;
    height: 10px;
    display: flex;
    align-items: center;
    gap: 8px;
    padding-left: 4px;
    background: #fff;
}

.menubar .profile {
    position: absolute;
    left: 351px;
}

/* main toolbar */
.toolbar {
    flex: none;
    height: 15px;
    display: grid;
    grid-template-columns: 15px 19px 41px 73px 92px 51px 90px 25px 60px 111px 118px 71px auto;
    border-bottom: 1px solid var(--line);
}

.group {
    display: flex;
    align-items: center;
    justify-content: space-evenly;
    border-right: 1px solid var(--line);
}

.tight {
    justify-content: space-between;
    padding-left: 2px;
}

.drop {
    gap: 4px;
}

.drop::after {
    content: "";
    border: 2px solid transparent;
    border-top: 3px solid #444;
    border-bottom: 0;
}

.on {
    height: 14px;
    padding: 0 2px;
    background: #b8d9f5;
    color: #222;
}

.profile-btn {
    justify-content: start;
    padding-left: 15px;
}

/* info box */
.infobox {
    flex: none;
    height: 24px;
    display: flex;
    align-items: center;
    gap: 1px;
    padding: 4px 6px 0;
    color: #333;
}

.pop {
    width: 21px;
    height: 10px;
    gap: 4px;
    background: #fff;
}

.pop::after,
.nav-menu::after,
.gear::after,
.zoom::after,
.opt::after {
    content: "";
    border: 2px solid transparent;
    border-left: 3px solid #333;
    border-right: 0;
}

.pop.active {
    background: var(--hi);
}

.pop.active::after {
    display: none;
}

.pop.tall {
    width: 25px;
    height: 14px;
    margin-bottom: 5px;
}

.main {
    flex: 1;
    min-height: 0;
    display: flex;
    font-family: Lato, "Open Sans", sans-serif;
}

/* toolbox */
.toolbox {
    flex: none;
    width: 48px;
    color: #8e8e8e;
}

.toolbox h3 {
    height: 10px;
    margin: 0;
    padding-left: 6px;
    background: var(--bar);
    color: var(--ink);
    font: inherit;
    line-height: 10px;
    white-space: nowrap;
}

.toolbox h3.closed::before,
.props::before {
    content: "";
    display: inline-block;
    margin-right: 4px;
    border: 2px solid transparent;
    border-left: 3px solid #111;
    border-right: 0;
}

.toolbox h3.closed {
    padding-left: 4px;
}

.tools {
    display: grid;
    grid-template-columns: 1fr 1fr;
    grid-auto-rows: 1fr;
}

.tools .icon {
    width: 13px;
    height: 13px;
}

.pick-tools {
    height: 23px;
    padding: 2px 0 4px;
    color: #555;
}

.project-tools {
    height: 158px;
    padding-bottom: 2px;
}

.window-tools {
    height: 50px;
    padding-bottom: 3px;
}

.doc-tools {
    height: 128px;
    padding-bottom: 2px;
}

.selected {
    background: var(--hi);
}

/* navigator */
.navigator {
    flex: none;
    width: 122px;
    display: flex;
    flex-direction: column;
    padding: 4px 3px 0 2px;
    border-left: 1px solid #ddd;
}

.nav-tabs {
    display: flex;
    height: 18px;
    color: #555;
}

.nav-tabs button {
    width: 16px;
    height: 17px;
}

.nav-tabs .selected {
    margin-left: 5px;
}

.nav-tabs .nav-menu {
    width: 17px;
    height: 10px;
    margin: 3px 0 0 auto;
    gap: 2px;
    background: #fff;
}

.nav-menu .icon {
    width: 8px;
    height: 8px;
}

.search {
    display: flex;
    align-items: center;
    height: 10px;
    margin: 4px 0 1px;
    padding-left: 2px;
    gap: 3px;
    background: #fff;
}

.search .icon {
    width: 7px;
    height: 7px;
}

.search input {
    flex: 1;
    min-width: 0;
    height: 10px;
    padding: 0;
    border: 0;
    outline: 0;
    background: none;
    color: inherit;
    font: inherit;
}

.search input::placeholder {
    color: #777;
}

.tree-box {
    flex: 1;
    background: #fff;
}

.tree {
    display: grid;
    grid-auto-rows: 1fr;
    height: 177px;
    margin: 0;
    padding: 0;
    list-style: none;
}

.tree li {
    display: flex;
    align-items: center;
    gap: 1px;
    white-space: nowrap;
}

.tree li::before {
    content: "";
    flex: none;
    width: 3px;
    height: 3px;
    margin: 0 3px 2px 0;
}

.tree li.open::before {
    border: solid #333;
    border-width: 0 1px 1px 0;
    transform: rotate(45deg);
}

.tree .icon {
    width: 10px;
    height: 9px;
}

.lvl0 { padding-left: 2px; }
.lvl1 { padding-left: 6px; }
.lvl2 { padding-left: 12px; }

.blue .icon {
    stroke: #5f86f5;
}

.tree li.current {
    background: var(--bar);
    color: #222;
    font-weight: bold;
}

.nav-actions {
    display: flex;
    align-items: center;
    gap: 5px;
    height: 18px;
    padding-left: 1px;
}

.props {
    justify-content: start;
    height: 11px;
    margin-bottom: 2px;
    padding-left: 5px;
    background: var(--bar);
}

/* workspace */
.workspace {
    flex: 1;
    min-width: 0;
    display: flex;
    flex-direction: column;
}

.tabs {
    flex: none;
    height: 12px;
    display: flex;
    background: var(--bar);
    border-top: 1px solid #c8c8c8;
}

.overview {
    width: 13px;
    color: #777;
}

.tab {
    display: flex;
    align-items: center;
    width: 160px;
    padding: 0 3px 0 2px;
    gap: 2px;
    color: #777;
    white-space: nowrap;
}

.tab.active {
    background: #fff;
}

.tab b {
    margin-left: auto;
    color: #222;
}

.tab .icon,
.overview .icon {
    width: 9px;
    height: 9px;
}

.tab-nav {
    width: 27px;
    margin-left: auto;
    background: #ebebeb;
}

.canvas {
    flex: 1;
    min-height: 0;
    position: relative;
    overflow: hidden;
    background: #fff;
    color: #222;
    font: 10px/11px "Liberation Sans", Arial, sans-serif;
}

.plan {
    position: absolute;
    inset: 0;
    width: 100%;
    height: 100%;
    fill: none;
}

.clipped-label {
    position: absolute;
    left: 712px;
    top: 10px;
    font-size: 11px;
    font-weight: bold;
}

.canvas table {
    border-collapse: collapse;
    table-layout: fixed;
}

.canvas th,
.canvas td {
    padding: 0;
}

.c-no { width: 14px; }
.c-m2 { width: 59px; }
.c-area { width: 43px; }

/* selected zone table */
.parter {
    position: absolute;
    left: 14px;
    top: 48px;
    width: 161px;
}

.parter tr { height: 15px; }
.parter tr:first-child { height: 13px; }
.parter .sum { height: 23px; }

.parter th,
.parter td {
    border: 1px solid #1fa02c;
    vertical-align: top;
}

.parter .sum td,
.parter td {
    padding: 0 3px;
    font-weight: bold;
}

.parter th:first-child {
    padding-left: 7px;
    background: #003a00;
    color: #c8f8cc;
    font-size: 9px;
    text-align: left;
}

.parter th:last-child {
    padding-right: 3px;
    background: #66b094;
    color: #b8ffd0;
    text-align: right;
}

.parter td:first-child {
    padding: 0;
    color: #aaa;
    font-size: 6px;
    font-weight: normal;
    text-align: center;
}

.parter td:last-child {
    font-weight: normal;
    text-align: right;
}

.parter .sum td:first-child {
    padding-right: 3px;
    background: #b0ffc0;
    color: #14401c;
    font-size: 10px;
    font-weight: bold;
    text-align: right;
}

.handles {
    position: absolute;
    left: 6px;
    top: 40px;
    width: 172px;
    height: 110px;
}

.rooms {
    position: absolute;
    left: 195px;
    top: 73px;
    width: 91px;
    background: #fff;
}

.rooms tr,
.topstamp tr {
    height: 12px;
}

.rooms td,
.rooms th,
.topstamp td,
.topstamp th {
    border: 1px solid #888;
    line-height: 11px;
    font-weight: normal;
    text-align: center;
}

.rooms th,
.topstamp th {
    background: #333;
    color: #fff;
}

.rooms td:nth-child(2) {
    padding-left: 3px;
    text-align: left;
}

.rooms td:last-child {
    padding-right: 3px;
    text-align: right;
}

.rooms .sum td {
    font-weight: bold;
}

.topstamp {
    position: absolute;
    left: 332px;
    top: 113px;
    width: 47px;
    background: #fff;
}

/* zone stamps */
.pill {
    position: absolute;
    width: 57px;
    height: 17px;
    border: 1px solid #222;
    border-radius: 9px;
    background: #fff;
    font-size: 11px;
    line-height: 15px;
    text-align: center;
}

.stamp {
    position: absolute;
    width: 54px;
    display: grid;
    border: 1px solid #333;
    background: #fff;
    font-size: 11px;
    line-height: 16px;
    text-align: center;
}

.stamp > * + * {
    border-top: 1px solid #333;
}

.stamp b {
    font-size: 12px;
}

.stamp sup {
    font-size: 7px;
    line-height: 0;
}

.pill-a { left: 256px; top: 331px; }
.stamp-a { left: 257px; top: 364px; }
.pill-b { left: 506px; top: 403px; }
.stamp-b { left: 509px; top: 436px; width: 52px; }
.pill-c { left: 798px; top: 333px; }
.stamp-c { left: 799px; top: 365px; }

/* schedule window */
.window {
    position: absolute;
    left: 417px;
    top: 13px;
    width: 428px;
    height: 327px;
    display: flex;
    flex-direction: column;
    padding: 0 3px 3px;
    border: 1px solid #88a7c6;
    background: #b4cde6;
    box-shadow: 0 0 3px rgba(0, 0, 0, 0.4);
    color: var(--ink);
    font: 6px/8px "Open Sans", "Noto Sans", sans-serif;
}

.window-title {
    flex: none;
    height: 15px;
    display: flex;
    align-items: center;
    gap: 2px;
    margin: 0 -3px;
    padding-left: 3px;
    background: #9cb8d7;
}

.window-title .icon {
    width: 8px;
    height: 8px;
    stroke: #7c9cf0;
    fill: #fff;
}

.window-buttons {
    display: flex;
    gap: 1px;
    height: 9px;
    margin-left: auto;
    padding-right: 4px;
}

.window-buttons button {
    width: 18px;
    border-radius: 1px;
    background: #bccee2;
}

.window-buttons .icon {
    stroke: #8293a8;
}

.window-buttons .close {
    background: #cc4331;
}

.window-buttons .close .icon {
    stroke: #fff;
    stroke-width: 3;
}

.window-bar {
    flex: none;
    height: 19px;
    display: flex;
    align-items: center;
    gap: 4px;
    padding-right: 3px;
    background: #f0f0f0;
}

.window-bar button {
    height: 12px;
    background: #fbfbfb;
    color: #444;
}

.window-bar .gear {
    width: 22px;
    gap: 3px;
    background: none;
}

.window-bar .sel {
    width: 20px;
}

.window-bar .counts {
    margin-left: auto;
}

.window-bar .scheme {
    width: 87px;
    margin-left: 4px;
}

.sheet {
    flex: 1;
    min-height: 0;
    display: grid;
    grid-template-columns: 14px 1fr 9px;
    grid-template-rows: 14px 1fr;
    padding-left: 3px;
    background: #f0f0f0;
}

.sheet text {
    fill: #777;
    font-size: 6px;
    text-anchor: middle;
}

.origin {
    background: #fff;
}

.ruler-h,
.ruler-v {
    width: 100%;
    height: 100%;
    min-width: 0;
    background: #fff;
}

.ruler-v {
    grid-area: 2 / 1;
}

.sheet-body {
    grid-area: 2 / 2;
    min-width: 0;
    padding: 2px 0 0 3px;
    background: #fff;
}

.scroll-v {
    grid-area: 2 / 3;
    width: 2px;
    margin: 6px 0 8px 4px;
    background: #777;
}

.schedule {
    width: 100%;
    height: 147px;
    font-size: 7px;
    line-height: 7px;
}

.schedule th,
.schedule td {
    border: 1px solid #777;
}

.schedule th {
    height: 15px;
    border: 1px solid #002060;
    background: #00407f;
    color: #fff;
    font-weight: 600;
}

.schedule td {
    text-align: center;
}

.schedule td:nth-child(3),
.schedule td:nth-child(4) {
    padding-left: 1px;
    text-align: left;
}

.c-id { width: 66px; }
.c-nr { width: 48px; }
.c-name { width: 85px; }
.c-pow { width: 67px; }

.subtotal td {
    background: #bdbdbd;
}

.window-foot {
    flex: none;
    height: 9px;
    display: flex;
    align-items: center;
    gap: 3px;
    padding: 0 28px 0 10px;
    background: #f0f0f0;
}

.window-foot .zoom {
    width: 28px;
    justify-content: space-between;
}

.window-foot .fit {
    width: 13px;
    height: 7px;
}

.scroll-h {
    flex: 1;
    height: 2px;
    margin-left: 6px;
    background: #777;
}

/* quick options */
.quick {
    flex: none;
    height: 11px;
    display: flex;
    align-items: center;
}

.quick-nav {
    flex: none;
    width: 38px;
    display: flex;
    justify-content: space-around;
    color: #aaa;
}

.quick .icon {
    width: 9px;
    height: 9px;
}

.opt {
    flex: 1 1 0;
    min-width: 0;
    height: 10px;
    padding: 0 3px 0 2px;
    border-left: 1px solid var(--line);
}

.opt span {
    flex: 1;
    text-align: center;
}

/* bottom */
.bottombar {
    flex: none;
    height: 18px;
    display: flex;
    justify-content: flex-end;
    align-items: start;
    padding-right: 89px;
    border-bottom: 1px solid #e2e2e2;
}

.bottombar .group {
    height: 10px;
    padding: 0 3px;
    gap: 1px;
}

.bottombar .group:last-child {
    border: 0;
}

.status {
    flex: none;
    height: 12px;
    display: flex;
    align-items: center;
    justify-content: flex-end;
    gap: 11px;
    padding-right: 21px;
}

.status .icon {
    width: 9px;
    height: 9px;
}

.brand {
    font-size: 7px;
    font-weight: 600;
}

.brand i {
    color: #aaa;
    font-style: normal;
    font-weight: normal;
}
```
